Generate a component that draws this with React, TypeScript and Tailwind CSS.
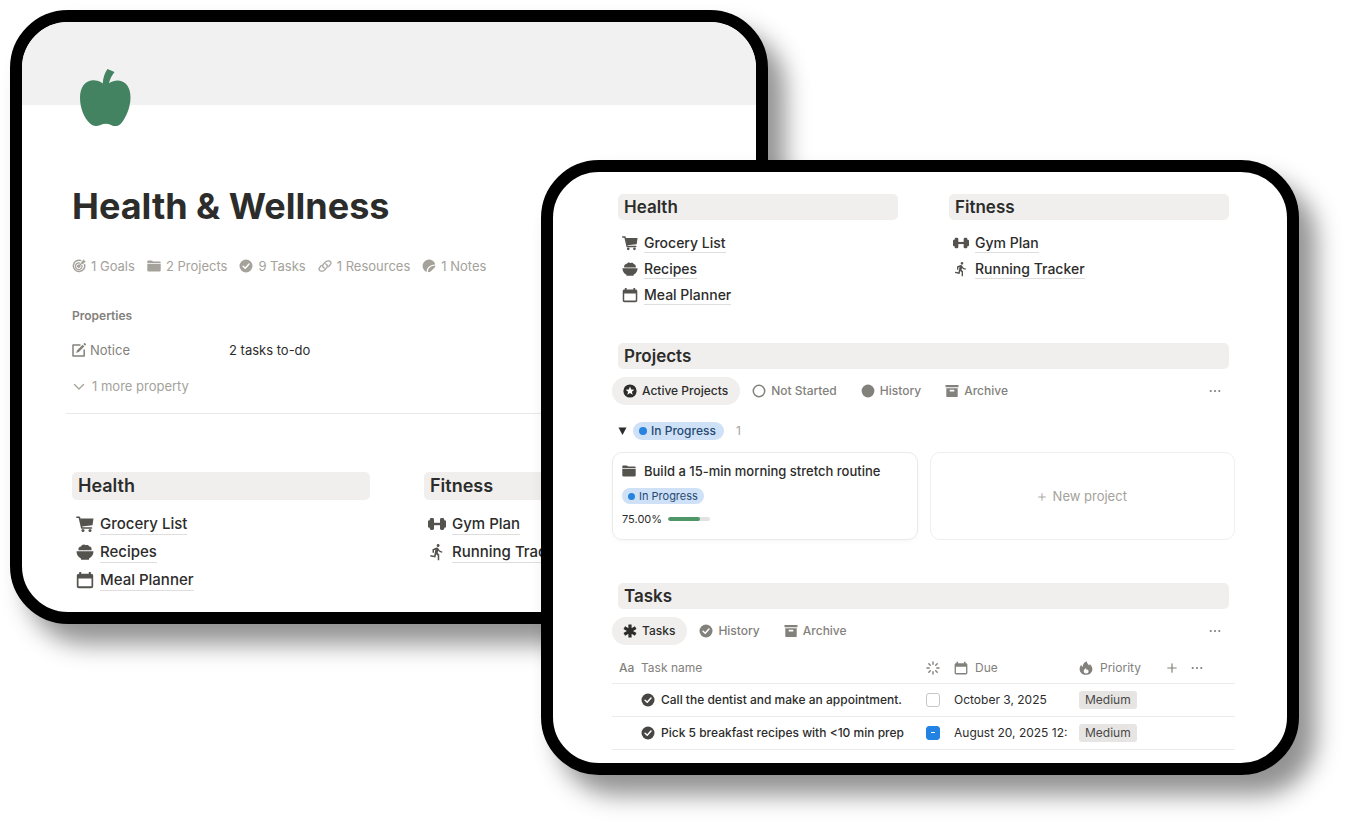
import { useState, type ReactNode } from "react";
import { MdDirectionsRun } from "react-icons/md";

type IconProps = { className?: string };

function Apple() {
  return (
    <svg viewBox="0 0 51 58" className="ml-2 h-[58px] w-[51px] fill-[#448361]" aria-hidden="true">
      <path d="M27.5 0 34.5 3C31.6 6.6 30.2 9.700 29 14.2 32 12.200 35 11.300 38 11.400 46.200 11.700 50.500 18.500 50.500 28.500 50.500 39 45.500 49.500 41 54.500 38 57.700 34.500 57.700 31 55.900 27.500 54.300 24 54.300 20.500 55.900 16.500 57.700 12.800 57.500 9.500 54 4 48.500 0 39 0 28.500 0 18.500 5 11.500 12.800 11.200 16.500 11.100 20 12.200 22.700 14.400 23 9 24.800 3.800 27.500 0Z" />
    </svg>
  );
}

function Target({ className }: IconProps) {
  return (
    <svg viewBox="0 0 14 14" className={className} fill="none" stroke="currentColor" aria-hidden="true">
      <path d="M9.200 1.600A5.700 5.700 0 1 0 12.400 4.900" strokeWidth="1.500" />
      <path d="M8 4.200A3.300 3.300 0 1 0 9.800 6" strokeWidth="1.300" />
      <circle cx="6.700" cy="7.200" r="1.300" fill="currentColor" />
      <path d="M6.700 7.300 11 3" strokeWidth="1.300" />
      <path d="M9.800 2.800 11.800.700 12 2.100 13.400 2.400 11.400 4.400 10 4.200Z" fill="currentColor" strokeWidth=".6" />
    </svg>
  );
}

function Folder({ className }: IconProps) {
  return (
    <svg viewBox="0 0 14 14" className={className} fill="currentColor" aria-hidden="true">
      <path d="M.3 2.500C.3 1.800.7 1.400 1.400 1.400H4.400C5 1.400 5.300 1.600 5.600 2L6 2.500H12.500C13.300 2.500 13.700 2.900 13.700 3.600V4.200H.3ZM.3 5H13.700V11.200C13.700 12 13.300 12.400 12.500 12.400H1.500C.7 12.400.3 12 .3 11.200Z" />
    </svg>
  );
}

function CheckDisc({ className }: IconProps) {
  return (
    <svg viewBox="0 0 14 14" className={className} aria-hidden="true">
      <circle cx="7" cy="7" r="6.500" fill="currentColor" />
      <path d="M4.100 7.200 6.200 9.200 10 5" fill="none" stroke="#fff" strokeWidth="1.500" strokeLinecap="round" strokeLinejoin="round" />
    </svg>
  );
}

function ChainLink({ className }: IconProps) {
  return (
    <svg viewBox="0 0 14 14" className={className} fill="none" stroke="currentColor" strokeWidth="1.300" strokeLinecap="round" aria-hidden="true">
      <path d="M6.300 9.100C4.900 8.700 4.200 7 5.100 5.700L7.200 3.200C8.100 2.100 9.400 1.700 10.900 1.800 12.600 2 13.500 3.700 12.600 5.200L10.600 7.600" />
      <path d="M7.700 4.900C9.100 5.300 9.800 7 8.900 8.300L6.800 10.800C5.900 11.900 4.600 12.300 3.100 12.200 1.400 12 .5 10.300 1.400 8.800L3.400 6.400" />
    </svg>
  );
}

function NoteDisc({ className }: IconProps) {
  return (
    <svg viewBox="0 0 14 14" className={className} fill="currentColor" aria-hidden="true">
      <path d="M4.600 12.900A6.400 6.400 0 1 1 13.200 5.400C8.500 5.600 4.700 8.200 4.600 12.900Z" />
      <path d="M5.900 13.200C5.900 9.600 8.600 6.700 13.400 6.600 13.200 8 12.700 8.700 11.700 9.600L9.200 12C8.300 12.800 7.300 13.200 5.900 13.200Z" />
    </svg>
  );
}

function Edit({ className }: IconProps) {
  return (
    <svg viewBox="0 0 14 14" className={className} aria-hidden="true">
      <path d="M8.500 1.900H1V13.100H12.200V6.500" fill="none" stroke="currentColor" strokeWidth="1.500" strokeLinejoin="round" />
      <path d="M10.600 1.800 12.300 3.500 6.800 9 4.100 10 5.100 7.300ZM11.300 1.100 12 .4C12.400 0 12.900 0 13.300.4L13.700.8C14.100 1.200 14.100 1.700 13.700 2.100L13 2.800Z" fill="currentColor" />
    </svg>
  );
}

function Chevron({ className }: IconProps) {
  return (
    <svg viewBox="0 0 14 14" className={className} fill="none" stroke="currentColor" strokeWidth="1.300" strokeLinecap="round" strokeLinejoin="round" aria-hidden="true">
      <path d="M2.500 5.500 7 10 11.500 5.500" />
    </svg>
  );
}

function Cart({ className }: IconProps) {
  return (
    <svg viewBox="0 0 18 18" className={className} aria-hidden="true">
      <path d="M.8 2.200H3.300L5.800 13H15.500" fill="none" stroke="currentColor" strokeWidth="1.600" strokeLinecap="round" strokeLinejoin="round" />
      <path d="M4 3.400H17.500L16.500 10.300 5.600 11.500Z" fill="currentColor" />
      <circle cx="7" cy="15.600" r="1.500" fill="currentColor" />
      <circle cx="14" cy="15.600" r="1.500" fill="currentColor" />
    </svg>
  );
}

function Bowl({ className }: IconProps) {
  return (
    <svg viewBox="0 0 18 18" className={className} fill="currentColor" aria-hidden="true">
      <path d="M2.500 7.200C1.900 5.200 3.300 3.600 5 3.500 6 1.600 8.300 1 9.800 2.200 11.300 1.500 12.700 2.200 13.200 3.300 15 3.500 16 5.300 15.500 7.200ZM.5 8.200H17.500C17.500 11.800 15.600 14.300 13 15.400V16.700H5V15.400C2.400 14.300.5 11.800.5 8.200Z" />
    </svg>
  );
}

function Calendar({ className }: IconProps) {
  return (
    <svg viewBox="0 0 18 18" className={className} aria-hidden="true">
      <path d="M3.200 2.800V1H5.200V2.800H12.800V1H14.800V2.800C16.700 2.800 17.200 3.500 17.200 5V15C17.200 16.500 16.500 17.200 15 17.200H3C1.500 17.200.8 16.500.8 15V5C.8 3.500 1.300 2.800 3.200 2.800ZM2.500 7.400V15.300H15.500V7.400Z" fill="currentColor" fillRule="evenodd" />
    </svg>
  );
}

function Dumbbell({ className }: IconProps) {
  return (
    <svg viewBox="0 0 18 18" className={className} fill="currentColor" aria-hidden="true">
      <rect x="0" y="5.300" width="2.600" height="7.400" rx="1.200" />
      <rect x="1.800" y="3" width="4.200" height="12" rx="1.400" />
      <rect x="5" y="7.800" width="8" height="2.400" />
      <rect x="12" y="3" width="4.200" height="12" rx="1.400" />
      <rect x="15.400" y="5.300" width="2.600" height="7.400" rx="1.200" />
    </svg>
  );
}

function StarDisc({ className }: IconProps) {
  return (
    <svg viewBox="0 0 14 14" className={className} aria-hidden="true">
      <circle cx="7" cy="7" r="6.600" fill="currentColor" />
      <path d="M7 2.600 8.200 5.500 11.300 5.700 8.900 7.700 9.700 10.700 7 9.100 4.300 10.700 5.100 7.700 2.700 5.700 5.800 5.500Z" fill="#fff" />
    </svg>
  );
}

function Ring({ className }: IconProps) {
  return (
    <svg viewBox="0 0 14 14" className={className} aria-hidden="true">
      <circle cx="7" cy="7" r="5.700" fill="none" stroke="currentColor" strokeWidth="1.500" />
    </svg>
  );
}

function Disc({ className }: IconProps) {
  return (
    <svg viewBox="0 0 14 14" className={className} aria-hidden="true">
      <circle cx="7" cy="7" r="6.400" fill="currentColor" />
    </svg>
  );
}

function ArchiveBox({ className }: IconProps) {
  return (
    <svg viewBox="0 0 14 14" className={className} fill="currentColor" aria-hidden="true">
      <path d="M.5 1H13.500V3.300H.5ZM1.300 4.300H12.700V12.200C12.700 12.800 12.400 13.100 11.800 13.100H2.200C1.600 13.100 1.300 12.800 1.300 12.200ZM4.700 5.700V7.500H9.300V5.700Z" fillRule="evenodd" />
    </svg>
  );
}

function Asterisk({ className }: IconProps) {
  return (
    <svg viewBox="0 0 14 14" className={className} stroke="currentColor" strokeWidth="3.200" aria-hidden="true">
      <path d="M7 .4V13.600M1.300 3.700 12.700 10.300M12.700 3.700 1.300 10.300" />
    </svg>
  );
}

function Spinner({ className }: IconProps) {
  return (
    <svg viewBox="0 0 14 14" className={className} stroke="currentColor" strokeWidth="1.400" strokeLinecap="round" aria-hidden="true">
      <path d="M7 1V3.200M7 10.800V13M1 7H3.200M10.800 7H13M2.800 2.800 4.300 4.300M9.700 9.700 11.200 11.200M2.800 11.200 4.300 9.700M9.700 4.300 11.200 2.800" />
    </svg>
  );
}

function Flame({ className }: IconProps) {
  return (
    <svg viewBox="0 0 14 14" className={className} fill="currentColor" aria-hidden="true">
      <path d="M7.600.2C8 2.300 9.500 3.200 10.100 4.600 10.500 4.200 10.700 3.600 10.700 2.900 12.500 4.300 13.400 6.300 13.400 8 13.400 11.500 10.600 13.800 7 13.800 3.400 13.800.6 11.500.6 8 .6 6.300 1.400 4.700 2.300 3.700 2.500 4.900 2.900 5.500 3.600 5.900 3.800 3.300 5.100 1.300 7.600.2ZM6.800 7.300C5.500 8.300 4.500 9.400 4.700 10.500 4.900 11.800 5.900 12.500 7.100 12.500 8.600 12.500 9.600 11.500 9.500 10.200 9.500 9.300 9 8.700 8.800 8.200 8.500 8.800 8.200 9.100 7.700 9.200 7.600 8.300 7.400 7.800 6.800 7.300Z" fillRule="evenodd" />
    </svg>
  );
}

function Plus({ className }: IconProps) {
  return (
    <svg viewBox="0 0 10 10" className={className} stroke="currentColor" strokeWidth="1.200" strokeLinecap="round" aria-hidden="true">
      <path d="M5 .8V9.200M.8 5H9.200" />
    </svg>
  );
}

function Dots({ className }: IconProps) {
  return (
    <svg viewBox="0 0 12 12" className={className} fill="currentColor" aria-hidden="true">
      <circle cx="1.700" cy="6" r="1.100" />
      <circle cx="6" cy="6" r="1.100" />
      <circle cx="10.300" cy="6" r="1.100" />
    </svg>
  );
}

const healthLinks = [
  { label: "Grocery List", icon: Cart },
  { label: "Recipes", icon: Bowl },
  { label: "Meal Planner", icon: Calendar },
];

const fitnessLinks = [
  { label: "Gym Plan", icon: Dumbbell },
  { label: "Running Tracker", icon: MdDirectionsRun },
];

const stats = [
  { label: "1 Goals", icon: Target },
  { label: "2 Projects", icon: Folder },
  { label: "9 Tasks", icon: CheckDisc },
  { label: "1 Resources", icon: ChainLink },
  { label: "1 Notes", icon: NoteDisc },
];

function Frame({ className, children }: { className: string; children: ReactNode }) {
  return (
    <div className={`row-start-1 self-start overflow-hidden rounded-[58px] border-[12px] border-black bg-white shadow-[17px_20px_24px_rgba(0,0,0,0.43)] ${className}`}>
      {children}
    </div>
  );
}

type LinkItem = { label: string; icon: (props: IconProps) => ReactNode };

function LargeLinks({ title, items }: { title: string; items: LinkItem[] }) {
  return (
    <section>
      <h2 className="rounded-[5px] bg-[#f0efed] px-1.5 text-lg leading-7 font-semibold">{title}</h2>
      <ul className="mt-2.5 pl-1">
        {items.map(({ label, icon: Icon }) => (
          <li key={label} className="flex h-7 items-center gap-1.5">
            <Icon className="size-[18px] text-[#55534e]" />
            <a href="#" className="border-b border-[#dfdedc] text-[15px] leading-5 font-medium whitespace-nowrap">{label}</a>
          </li>
        ))}
      </ul>
    </section>
  );
}

function SmallLinks({ title, items }: { title: string; items: LinkItem[] }) {
  return (
    <section>
      <SectionBar>{title}</SectionBar>
      <ul className="mt-2.5 pl-1">
        {items.map(({ label, icon: Icon }) => (
          <li key={label} className="flex h-[26px] items-center gap-1.5">
            <Icon className="size-4 text-[#55534e]" />
            <a href="#" className="border-b border-[#dfdedc] text-sm leading-[18px] font-medium">{label}</a>
          </li>
        ))}
      </ul>
    </section>
  );
}

function SectionBar({ children }: { children: ReactNode }) {
  return <h2 className="rounded-[5px] bg-[#f0efed] px-1.5 text-[17px] leading-[26px] font-semibold">{children}</h2>;
}

function ViewTabs({ tabs }: { tabs: LinkItem[] }) {
  const [active, setActive] = useState(tabs[0].label);
  return (
    <div className="mt-2 flex items-center gap-px">
      {tabs.map(({ label, icon: Icon }) => (
        <button
          key={label}
          type="button"
          aria-pressed={active === label}
          onClick={() => setActive(label)}
          className={`flex h-7 items-center gap-[5px] rounded-full pr-3 pl-[11px] text-xs font-medium ${active === label ? "bg-[#f0efed] text-[#2c2c2b]" : "text-[#83817c]"}`}
        >
          <Icon className="size-3.5" />
          {label}
        </button>
      ))}
      <button type="button" aria-label="View options" className="mr-3.5 ml-auto text-[#83817c]">
        <Dots className="size-3" />
      </button>
    </div>
  );
}

const tasks = [
  { name: "Call the dentist and make an appointment.", due: "October 3, 2025", priority: "Medium", partial: false },
  { name: "Pick 5 breakfast recipes with <10 min prep", due: "August 20, 2025 12:", priority: "Medium", partial: true },
];

function TaskTable() {
  return (
    <table className="mt-2 w-full table-fixed border-collapse text-left text-xs">
      <colgroup>
        <col />
        <col className="w-7" />
        <col className="w-[125px]" />
        <col className="w-[84px]" />
        <col className="w-6" />
        <col className="w-[52px]" />
      </colgroup>
      <thead>
        <tr className="h-[30px] border-b border-[#ecebea] text-[#83817c]">
          <th className="p-0 pl-[7px] font-normal">
            <span className="flex items-center gap-1.5">
              <span aria-hidden="true" className="w-4 font-medium">Aa</span>
              Task name
            </span>
          </th>
          <th className="p-0 pl-1" aria-label="Status"><Spinner className="size-3.5" /></th>
          <th className="p-0 pl-1 font-normal">
            <span className="flex items-center gap-[7px]"><Calendar className="size-3.5" />Due</span>
          </th>
          <th className="p-0 pl-1 font-normal">
            <span className="flex items-center gap-[7px]"><Flame className="size-3.5" />Priority</span>
          </th>
          <th className="p-0 pl-2">
            <button type="button" aria-label="Add property" className="block"><Plus className="size-2.5" /></button>
          </th>
          <th className="p-0 pl-2">
            <button type="button" aria-label="Table options" className="block"><Dots className="size-3" /></button>
          </th>
        </tr>
      </thead>
      <tbody>
        {tasks.map((task) => (
          <tr key={task.name} className="h-[33px] border-b border-[#ecebea]">
            <td className="p-0 pl-[29px]">
              <span className="flex items-center gap-1.5 font-medium whitespace-nowrap">
                <CheckDisc className="size-3.5 shrink-0 text-[#484642]" />
                {task.name}
              </span>
            </td>
            <td className="p-0 pl-1">
              <label className="grid size-3.5 place-items-center">
                <input
                  type="checkbox"
                  aria-label={`Done: ${task.name}`}
                  defaultChecked={task.partial}
                  className="col-start-1 row-start-1 size-3.5 appearance-none rounded-[3px] border border-[#c8c6c3] checked:border-[#2383e2] checked:bg-[#2383e2]"
                />
                {task.partial && <span className="col-start-1 row-start-1 h-px w-1 bg-white" />}
              </label>
            </td>
            <td className="p-0 pl-1 whitespace-nowrap">{task.due}</td>
            <td className="p-0 pl-1">
              <span className="inline-block rounded-[3px] bg-[#e6e5e3] px-1.5 leading-[18px] text-[#494846]">{task.priority}</span>
            </td>
            <td />
            <td />
          </tr>
        ))}
      </tbody>
    </table>
  );
}

function AreaPage() {
  return (
    <Frame className="col-span-2 col-start-1">
      <div className="h-[83px] bg-[#f1f1f1]" />
      <div className="-mt-9 pr-[34px] pb-[18px] pl-[50px]">
        <Apple />
        <h1 className="mt-[55px] text-4xl leading-[48px] font-bold">Health &amp; Wellness</h1>
        <ul className="mt-[26px] flex items-center gap-3 text-[13px] leading-5 text-[#a4a29b]">
          {stats.map(({ label, icon: Icon }) => (
            <li key={label} className="flex items-center gap-[5px]">
              <Icon className="size-3.5" />
              {label}
            </li>
          ))}
        </ul>
        <h2 className="mt-[30px] text-xs leading-5 font-semibold text-[#83817c]">Properties</h2>
        <dl className="mt-3.5 flex text-[13px] leading-5">
          <dt className="flex w-[157px] items-center gap-1 text-[#83817c]">
            <Edit className="size-3.5" />
            Notice
          </dt>
          <dd>2 tasks to-do</dd>
        </dl>
        <button type="button" className="mt-4 flex items-center gap-1.5 text-[13px] leading-5 text-[#a4a29b]">
          <Chevron className="size-3.5" />
          1 more property
        </button>
        <hr className="-mx-1.5 mt-[17px] border-[#e9e8e6]" />
        <div className="mt-[58px] grid grid-cols-2 gap-[54px]">
          <LargeLinks title="Health" items={healthLinks} />
          <LargeLinks title="Fitness" items={fitnessLinks} />
        </div>
      </div>
    </Frame>
  );
}

function DetailPage() {
  return (
    <Frame className="col-span-2 col-start-2 mt-[150px]">
      <div className="pt-[22px] pr-[52px] pb-[13px] pl-[59px]">
        <div className="mx-1.5 grid grid-cols-2 gap-[51px]">
          <SmallLinks title="Health" items={healthLinks} />
          <SmallLinks title="Fitness" items={fitnessLinks} />
        </div>
        <section className="mt-[35px]">
          <div className="mx-1.5"><SectionBar>Projects</SectionBar></div>
          <ViewTabs
            tabs={[
              { label: "Active Projects", icon: StarDisc },
              { label: "Not Started", icon: Ring },
              { label: "History", icon: Disc },
              { label: "Archive", icon: ArchiveBox },
            ]}
          />
          <div className="mt-4 flex h-5 items-center pl-1.5 text-xs">
            <button type="button" aria-label="Collapse group">
              <svg viewBox="0 0 9 8" className="h-2 w-[9px] fill-[#2c2c2b]" aria-hidden="true"><path d="M.5 .5H8.500L4.500 8Z" /></svg>
            </button>
            <span className="ml-1.5 flex h-[18px] items-center gap-1 rounded-full bg-[#cfe1f7] pr-2 pl-1.5 font-medium text-[#264a72]">
              <span className="size-2 rounded-full bg-[#2783de]" />
              In Progress
            </span>
            <span className="ml-3 text-[#a4a29b]">1</span>
          </div>
          <div className="mt-[11px] grid grid-cols-2 gap-3">
            <article className="h-[88px] rounded-[10px] border border-[#ebeae8] px-[9px] pt-2 shadow-[0_2px_4px_rgba(0,0,0,0.03)]">
              <h3 className="flex items-center gap-2 text-[13px] leading-5 font-medium whitespace-nowrap">
                <Folder className="size-3.5 text-[#55534e]" />
                Build a 15-min morning stretch routine
              </h3>
              <div className="mt-[7px] flex">
                <span className="flex h-4 items-center gap-1 rounded-full bg-[#cfe1f7] px-1.5 text-[11px] text-[#264a72]">
                  <span className="size-[7px] rounded-full bg-[#2783de]" />
                  In Progress
                </span>
              </div>
              <div className="mt-[7px] flex items-center gap-1.5 text-[11px] leading-4">
                75.00%
                <div role="progressbar" aria-label="Progress" aria-valuenow={75} className="h-1 w-[42px] overflow-hidden rounded-full bg-[#e3e2e0]">
                  <div className="h-full w-3/4 rounded-full bg-[#4f9768]" />
                </div>
              </div>
            </article>
            <button type="button" className="flex h-[88px] items-center justify-center gap-[7px] rounded-[10px] border border-[#f0efed] pt-0.5 text-[13px] text-[#a4a29b]">
              <Plus className="size-2" />
              New project
            </button>
          </div>
        </section>
        <section className="mt-[43px]">
          <div className="mx-1.5"><SectionBar>Tasks</SectionBar></div>
          <ViewTabs
            tabs={[
              { label: "Tasks", icon: Asterisk },
              { label: "History", icon: CheckDisc },
              { label: "Archive", icon: ArchiveBox },
            ]}
          />
          <TaskTable />
        </section>
      </div>
    </Frame>
  );
}

export default function App() {
  return (
    <main className="grid min-w-[1100px] grid-cols-[531fr_227fr_531fr] bg-white pt-2.5 pr-[47px] pb-[50px] pl-2.5 font-['Inter','Liberation_Sans',sans-serif] text-[#2c2c2b]">
      <AreaPage />
      <DetailPage />
    </main>
  );
}
